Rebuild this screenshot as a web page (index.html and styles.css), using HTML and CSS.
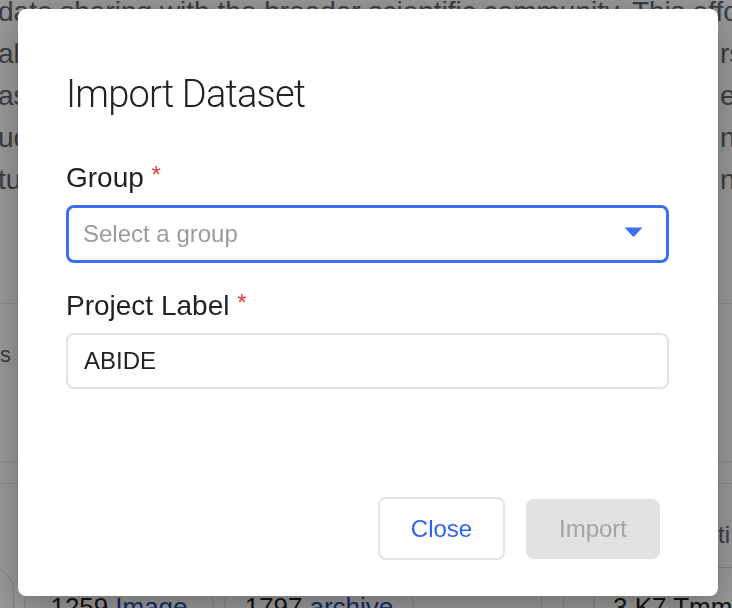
FILE: index.html
```html
<!DOCTYPE html>
<html lang="en">
  <head>
    <meta charset="UTF-8" />
    <meta name="viewport" content="width=device-width, initial-scale=1.0" />
    <title>Import Dataset</title>
    <link rel="stylesheet" href="styles.css">
  </head>
  <body>
    <div class="page">
      <div class="intro">
        <p>date sharing with the broader scientific community. This effort</p>
        <p class="split"><span>also</span><span>rs and</span></p>
        <p class="split"><span>as</span><span>ected</span></p>
        <p class="split"><span>uc</span><span>nclude</span></p>
        <p class="split"><span>tu</span><span>n the</span></p>
      </div>
      <div class="rule first"></div>
      <div class="tabs"><span>s</span></div>
      <div class="rule second"></div>
      <div class="rule third"></div>
      <div class="meta"><span>ti</span></div>
      <div class="stats">
        <div class="pill dot"></div>
        <div class="pill wide">1259 <span class="kind">Image</span></div>
        <div class="pill wide">1797 <span class="kind">archive</span></div>
        <div class="divider first"></div>
        <div class="divider"></div>
        <div class="pill last">3 K7 Tmm <span class="kind">nifti</span></div>
      </div>
    </div>

    <div class="backdrop">
      <div class="modal">
        <h1 class="title">Import Dataset</h1>

        <label class="label">Group <span class="req">*</span></label>
        <div class="select">
          <span class="placeholder">Select a group</span>
          <svg class="caret" width="19" height="10" viewBox="0 0 19 10">
            <path d="M0.5 0.5h18l-8.2 8.8a1 1 0 0 1-1.6 0z" fill="#3b6ef3" />
          </svg>
        </div>

        <label class="label project">Project Label <span class="req">*</span></label>
        <div class="input">ABIDE</div>

        <div class="footer">
          <button class="btn close">Close</button>
          <button class="btn import" disabled>Import</button>
        </div>
      </div>
    </div>
  </body>
</html>
```

FILE: styles.css
```css
html,
body {
  margin: 0;
  height: 100%;
}
body {
  width: 732px;
  height: 608px;
  overflow: hidden;
  position: relative;
  background: #fff;
  font-family: "Liberation Sans", Arial, sans-serif;
}

/* page behind the dialog */
.page {
  color: #62676f;
  display: flex;
  flex-direction: column;
}
.intro {
  margin: -9px 0 0 -2px;
  width: 760px;
  font-size: 28px;
}
.intro p {
  margin: 0;
  line-height: 42px;
  white-space: nowrap;
}
.intro .split {
  display: grid;
  grid-template-columns: 722px auto;
}
.rule {
  border-top: 1px solid #e4e4e4;
}
.rule.first {
  margin-top: 102px;
}
.tabs {
  margin-top: 36px;
  font-size: 22px;
  line-height: 30px;
}
.rule.second {
  margin-top: 91px;
}
.rule.third {
  margin-top: 21px;
}
.meta {
  margin-top: 36px;
  font-size: 24px;
  line-height: 30px;
  display: flex;
  justify-content: flex-end;
  padding-right: 2px;
}
.stats {
  margin-top: 17px;
  display: flex;
  align-items: center;
  gap: 10px;
  margin-left: -34px;
  font-size: 26px;
  color: #222;
}
.pill {
  flex: none;
  height: 80px;
  border: 1.5px solid #d9d9d9;
  border-radius: 40px;
  box-sizing: border-box;
  display: flex;
  align-items: center;
  justify-content: center;
  gap: 7px;
  white-space: nowrap;
}
.pill.dot {
  width: 48px;
}
.pill.wide {
  width: 190px;
}
.pill.last {
  width: 200px;
  margin-left: 19px;
  justify-content: flex-start;
  padding-left: 19px;
}
.divider {
  flex: none;
  width: 1px;
  height: 80px;
  background: #d9d9d9;
}
.divider.first {
  margin-left: 117px;
}
.divider + .divider {
  margin-left: 11px;
}
.kind {
  color: #2448b0;
}

/* dialog */
.backdrop {
  position: fixed;
  inset: 0;
  background: rgba(0, 0, 0, 0.4);
  display: flex;
  padding: 9px 14px 12px 18px;
}
.modal {
  flex: 1;
  background: #fff;
  border-radius: 8px;
  box-shadow: 0 8px 36px rgba(0, 0, 0, 0.3);
  padding: 63px 49px 36px 48px;
  display: flex;
  flex-direction: column;
}
.title {
  margin: 0;
  font-family: Roboto, "Liberation Sans", sans-serif;
  font-weight: 300;
  font-size: 38px;
  line-height: 44px;
  letter-spacing: -0.8px;
  color: #222;
}
.label {
  display: block;
  margin: 46px 0 11px;
  font-size: 28px;
  line-height: 32px;
  color: #222;
}
.label.project {
  margin-top: 27px;
}
.req {
  color: #e8392f;
  font-size: 24px;
  line-height: 0;
  vertical-align: 4px;
}
.select,
.input {
  box-sizing: border-box;
  font-size: 24px;
  border-radius: 8px;
  display: flex;
  align-items: center;
}
.select {
  height: 58px;
  border: 3px solid #3b6ef3;
  justify-content: space-between;
  padding: 0 23px 0 14px;
}
.placeholder {
  color: #9b9b9b;
}
.caret {
  margin-bottom: 5px;
}
.input {
  height: 56px;
  border: 2px solid #e2e2e2;
  padding: 0 16px;
  color: #222;
}
.footer {
  margin-top: auto;
  display: flex;
  justify-content: flex-end;
  align-items: center;
  gap: 21px;
  padding-right: 9px;
}
.btn {
  font-family: "Liberation Sans", Arial, sans-serif;
  font-size: 24px;
  border-radius: 8px;
  box-sizing: border-box;
}
.btn.close {
  width: 127px;
  height: 63px;
  background: #fff;
  border: 2px solid #e3e3e3;
  color: #2f64ee;
}
.btn.import {
  width: 134px;
  height: 60px;
  background: #e2e2e2;
  border: none;
  color: #a4a4a4;
}
```
